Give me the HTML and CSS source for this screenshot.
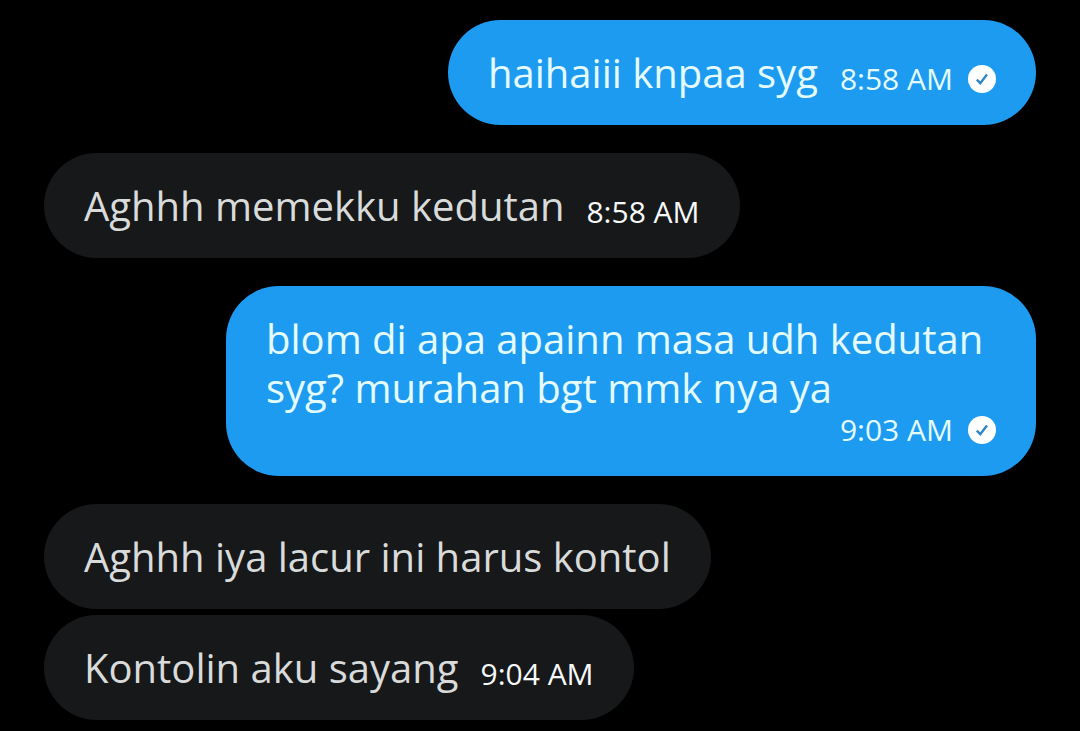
FILE: index.html
```html
<!DOCTYPE html>
<html lang="id">
<head>
    <meta charset="UTF-8">
    <meta name="viewport" content="width=device-width, initial-scale=1.0">
    <title>Messages</title>
    <link rel="stylesheet" href="styles.css">
</head>
<body>
    <main class="chat">
        <div class="message sent">
            <p class="text">haihaiii knpaa syg</p>
            <div class="meta">
                <time>8:58 AM</time>
                <svg class="check" viewBox="0 0 28 28" role="img" aria-label="Sent">
                    <circle cx="14" cy="14" r="14" fill="#fff"/>
                    <path d="M8.8 14.6l3.5 3.6 6.7-8.6" fill="none" stroke="#2f86c6" stroke-width="2.4"/>
                </svg>
            </div>
        </div>

        <div class="message received">
            <p class="text">Aghhh memekku kedutan</p>
            <div class="meta"><time>8:58 AM</time></div>
        </div>

        <div class="message sent long">
            <p class="text">blom di apa apainn masa udh kedutan syg? murahan bgt mmk nya ya</p>
            <div class="meta">
                <time>9:03 AM</time>
                <svg class="check" viewBox="0 0 28 28" role="img" aria-label="Sent">
                    <circle cx="14" cy="14" r="14" fill="#fff"/>
                    <path d="M8.8 14.6l3.5 3.6 6.7-8.6" fill="none" stroke="#2f86c6" stroke-width="2.4"/>
                </svg>
            </div>
        </div>

        <div class="group">
            <div class="message received">
                <p class="text">Aghhh iya lacur ini harus kontol</p>
            </div>
            <div class="message received">
                <p class="text">Kontolin aku sayang</p>
                <div class="meta"><time>9:04 AM</time></div>
            </div>
        </div>
    </main>
</body>
</html>
```

FILE: styles.css
```css
* {
    box-sizing: border-box;
}

body {
    margin: 0;
    background-color: #000;
    font-family: "Open Sans", "Noto Sans", sans-serif;
}

.chat {
    display: flex;
    flex-direction: column;
    gap: 28px;
    padding: 20px 44px 11px;
}

.group {
    display: flex;
    flex-direction: column;
    gap: 6px;
}

.message {
    display: flex;
    align-items: center;
    gap: 22px;
    max-width: 810px;
    padding: 28px 40px;
    border-radius: 53px;
}

.sent {
    align-self: flex-end;
    background-color: #1d9bf0;
    color: #e4fcff;
}

.received {
    align-self: flex-start;
    background-color: #16181a;
    color: #d9dbdb;
}

.long {
    flex-direction: column;
    align-items: stretch;
    gap: 0;
}

.text {
    margin: 0;
    font-size: 40px;
    line-height: 49px;
}

.meta {
    display: flex;
    align-items: center;
    justify-content: flex-end;
    gap: 15px;
    padding-top: 12px;
    font-size: 30px;
    line-height: 36px;
    white-space: nowrap;
}

.long .meta {
    padding-top: 0;
}

.received .meta {
    color: #f7f9f9;
}

.check {
    width: 28px;
    height: 28px;
}
```
